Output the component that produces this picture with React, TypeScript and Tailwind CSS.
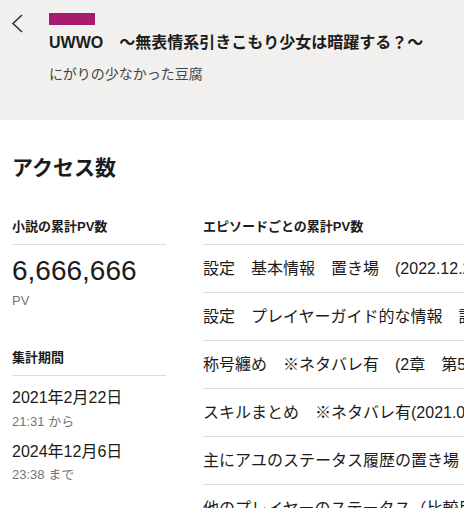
import React from 'react';

const font = { fontFamily: '"Liberation Sans", "Noto Sans CJK JP", sans-serif' };

const episodes = [
  '設定　基本情報　置き場　(2022.12.28更新)',
  '設定　プレイヤーガイド的な情報　説明',
  '称号纏め　※ネタバレ有　(2章　第5話時点)',
  'スキルまとめ　※ネタバレ有(2021.04.01更新)',
  '主にアユのステータス履歴の置き場',
  '他のプレイヤーのステータス（比較用）',
];

const App: React.FC = () => {
  return (
    <div className="w-full h-[508px] overflow-hidden bg-white text-[#1c1c1c]" style={font}>
      {/* Header */}
      <div className="h-[120px] bg-[#f1f0ee] flex">
        <div className="w-[49px] flex-shrink-0 pl-[11px] pt-[14px]">
          <svg width="14" height="19" viewBox="0 0 14 19" fill="none">
            <polyline points="11,1 2,9.5 11,18" stroke="#333" strokeWidth="1.6" />
          </svg>
        </div>
        <div className="pt-[13px] min-w-0">
          <div className="w-[46px] h-[12px] bg-[#a61d6d]"></div>
          <div className="mt-[6px] text-[16px] leading-[24px] font-bold whitespace-nowrap">
            UWWO　～無表情系引きこもり少女は暗躍する？～
          </div>
          <div className="mt-[9px] text-[14px] leading-[20px] text-[#444]">にがりの少なかった豆腐</div>
        </div>
      </div>

      {/* Content */}
      <div className="pl-3">
        <h2 className="mt-[33px] text-[21px] leading-[29px] font-bold">アクセス数</h2>
        <div className="mt-[35px] flex gap-[37px]">
          {/* Left column */}
          <div className="w-[154px] flex-shrink-0">
            <div className="text-[13px] leading-[20px] font-bold pb-[7px] border-b border-[#dcdcdc]">小説の累計PV数</div>
            <div className="pt-[10px] text-[28px] leading-[32px]">6,666,666</div>
            <div className="mt-[4px] text-[13px] leading-[20px] text-[#757575]">PV</div>

            <div className="mt-[37px] text-[13px] leading-[20px] font-bold pb-[7px] border-b border-[#dcdcdc]">集計期間</div>
            <div className="pt-[10px] text-[16px] leading-[24px]">2021年2月22日</div>
            <div className="mt-[3px] text-[13px] leading-[18px] text-[#757575]">21:31 から</div>
            <div className="mt-[9px] text-[16px] leading-[24px]">2024年12月6日</div>
            <div className="mt-[2px] text-[13px] leading-[18px] text-[#757575]">23:38 まで</div>
          </div>

          {/* Right column */}
          <div className="flex-1 min-w-0">
            <div className="text-[13px] leading-[20px] font-bold pb-[7px] border-b border-[#dcdcdc] whitespace-nowrap">
              エピソードごとの累計PV数
            </div>
            {episodes.map((title, i) => (
              <div key={i} className="h-[48px] flex items-center border-b border-[#dcdcdc] text-[16px] leading-[24px] whitespace-nowrap">
                {title}
              </div>
            ))}
          </div>
        </div>
      </div>
    </div>
  );
};

export default App;
